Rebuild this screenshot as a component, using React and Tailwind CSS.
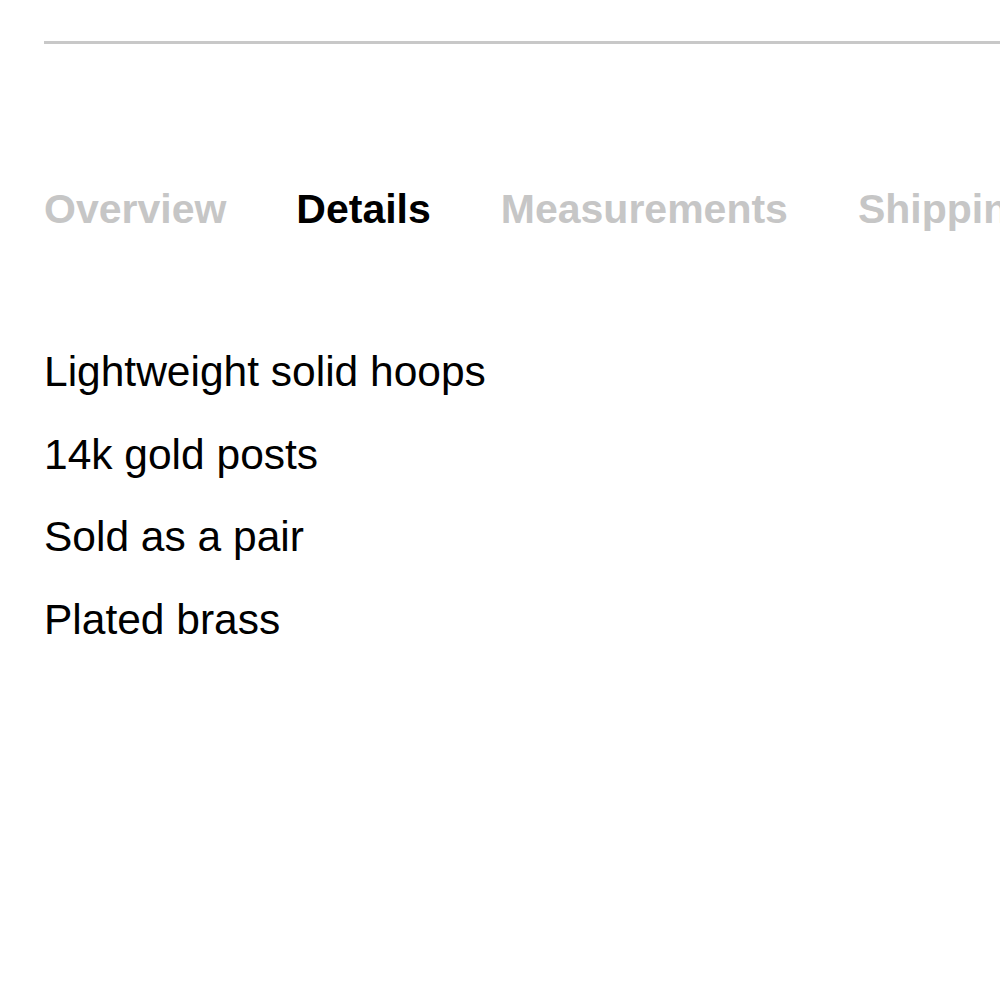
import React from 'react';

const tabs = ['Overview', 'Details', 'Measurements', 'Shipping'];
const details = ['Lightweight solid hoops', '14k gold posts', 'Sold as a pair', 'Plated brass'];

export default function App() {
  return (
    <div className="w-[1000px] h-[1000px] bg-white overflow-hidden pl-[44px] pt-[41px] font-['Liberation_Sans',Arial,sans-serif]">
      <div className="h-[3px] bg-[#c8c8c8] w-[1000px]" />

      {/* tab row */}
      <div className="flex gap-[70px] mt-[141px] whitespace-nowrap">
        {tabs.map((t) => (
          <span
            key={t}
            className={`text-[41px] leading-[48px] font-bold ${t === 'Details' ? 'text-black' : 'text-[#c6c6c6]'}`}
          >
            {t}
          </span>
        ))}
      </div>

      {/* detail lines */}
      <div className="mt-[98px] flex flex-col">
        {details.map((d) => (
          <p key={d} className="text-[42.5px] leading-[82.7px] text-black">{d}</p>
        ))}
      </div>
    </div>
  );
}
